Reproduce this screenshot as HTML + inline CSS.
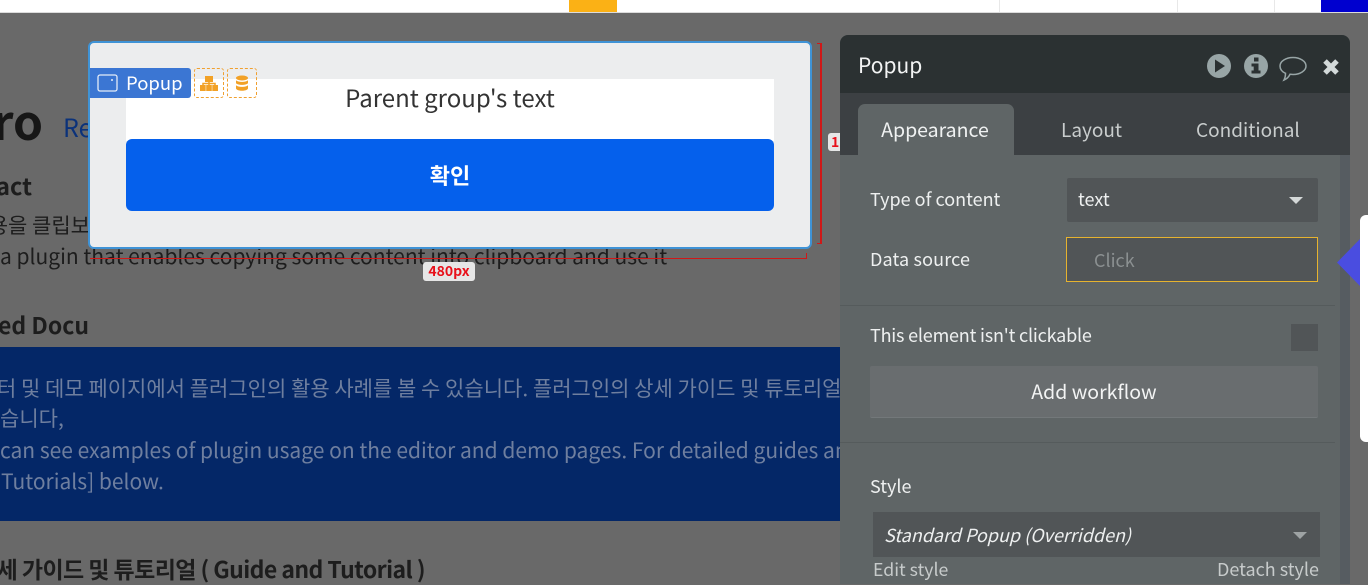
<!DOCTYPE html>
<html lang="en">
<head>
<meta charset="utf-8">
<title>Popup</title>
<style>
html,body{margin:0;padding:0;width:1368px;height:584px;overflow:hidden;background:#696969}
*{box-sizing:border-box}
.a{position:absolute;white-space:nowrap}
.k{font-family:"Liberation Sans","Noto Sans CJK KR",sans-serif}
.n,.n *{font-family:"Noto Sans CJK KR","Liberation Sans",sans-serif}
.pg{color:#1d1d1d;line-height:30px}
.b{font-weight:700}
.bl{color:#6f7f9f;font-size:21px;line-height:30px;font-weight:400}
.p{color:#eef0f0;font-size:18px;line-height:26px}
</style>
</head>
<body class="n">
<div class="a" style="left:0;top:0;width:1368px;height:13px;background:#fff;border-bottom:1px solid #dcdcdc"></div>
<div class="a" style="left:569px;top:0;width:48px;height:12px;background:#fbb115"></div>
<div class="a" style="left:999px;top:0;width:1px;height:12px;background:#e8e8e8"></div>
<div class="a" style="left:1177px;top:0;width:1px;height:12px;background:#e8e8e8"></div>
<div class="a" style="left:1274px;top:0;width:1px;height:12px;background:#e8e8e8"></div>
<div class="a" style="left:1321px;top:0;width:47px;height:12px;background:#0000cf"></div>

<!-- page behind -->
<div class="a pg b" style="right:1325px;top:94px;font-size:48px;line-height:50px;color:#161616">ro</div>
<div class="a pg" style="left:63px;top:112px;font-size:25px;color:#0b327a">Re</div>
<div class="a pg b" style="right:1336px;top:170px;font-size:23.500px">act</div>
<div class="a pg" style="right:1278px;top:210px;font-size:21px;width:200px;text-align:right">용을 클립보</div>
<div class="a pg" style="left:0;top:241px;font-size:21px">a plugin that enables copying some content into clipboard and use it</div>
<div class="a pg b" style="right:1279px;top:309px;font-size:23px">ed Docu</div>
<div class="a" style="left:0;top:347px;width:840px;height:174px;background:#042767;overflow:hidden">
  <div class="a bl" style="left:-3px;top:26px">터 및 데모 페이지에서 플러그인의 활용 사례를 볼 수 있습니다. 플러그인의 상세 가이드 및 튜토리얼</div>
  <div class="a bl" style="left:0;top:56px">습니다,</div>
  <div class="a bl" style="left:0;top:88px">can see examples of plugin usage on the editor and demo pages. For detailed guides and</div>
  <div class="a bl" style="left:1px;top:119px">Tutorials] below.</div>
</div>
<div class="a pg" style="right:943px;top:553px;font-size:23px;font-weight:700;letter-spacing:-.025em">세 가이드 및 튜토리얼 ( Guide and Tutorial )</div>

<!-- popup -->
<div class="a" style="left:88px;top:41px;width:724px;height:208px;background:#ecedee;border:2px solid #3f93d6;border-radius:6px"></div>
<div class="a" style="left:126px;top:79px;width:648px;height:62px;background:#fff"></div>
<div class="a" style="left:126px;top:78px;width:648px;text-align:center;font-size:24px;line-height:37px;color:#333">Parent group's text</div>
<div class="a b" style="left:126px;top:139px;width:648px;height:72px;background:#0560ec;border-radius:6px;color:#fff;text-align:center;font-size:22px;line-height:72px">확인</div>

<div class="a" style="left:90px;top:68px;width:101px;height:30px;background:#3b76d3;border-radius:0 3px 3px 0;color:#fff;font-size:18.500px;line-height:30px;padding-left:36px">Popup</div>
<svg class="a" style="left:97px;top:74px" width="22" height="18" viewBox="0 0 22 18"><rect x="1" y="1" width="19" height="16" rx="2" fill="none" stroke="#e4ecf8" stroke-width="1.3"/><circle cx="15" cy="6" r="1" fill="#e4ecf8"/></svg>
<div class="a" style="left:194px;top:68px;width:30px;height:30px;border:1px dashed #f0a030;border-radius:3px"></div>
<div class="a" style="left:227px;top:68px;width:30px;height:30px;border:1px dashed #f0a030;border-radius:3px"></div>
<svg class="a" style="left:200px;top:76px" width="18" height="15" viewBox="0 0 18 15"><path d="M5 0h8v6H5zM0 9h5.700v6H0zM6.200 9h5.600v6H6.200zM12.300 9H18v6h-5.700z" fill="#f2a126"/><path d="M9 6v3M3 9V7.500h12V9" fill="none" stroke="#f2a126" stroke-width="1.500"/></svg>
<svg class="a" style="left:235px;top:75px" width="14" height="17" viewBox="0 0 14 17"><ellipse cx="7" cy="3" rx="6" ry="2.500" fill="#f2a126"/><path d="M1 5c1 2.500 11 2.500 12 0v3c-1 2.500-11 2.500-12 0zM1 10c1 2.500 11 2.500 12 0v3.500c-1 3-11 3-12 0z" fill="#f2a126"/></svg>

<!-- red measures -->
<div class="a" style="left:90px;top:258px;width:717px;height:1px;background:#d01818"></div>
<div class="a" style="left:806px;top:253px;width:1px;height:6px;background:#d01818"></div>
<div class="a" style="left:820px;top:43px;width:2px;height:201px;background:#d01818"></div>
<div class="a" style="left:817px;top:43px;width:5px;height:1px;background:#d01818"></div>
<div class="a" style="left:817px;top:243px;width:5px;height:1px;background:#d01818"></div>
<div class="a k b" style="left:423px;top:262px;width:52px;height:19px;background:#e6e6e6;border-radius:3px;color:#e8101a;font-size:14px;line-height:19px;text-align:center">480px</div>
<div class="a k b" style="left:828px;top:133px;width:20px;height:18px;background:#e6e6e6;border-radius:3px;color:#e8101a;font-size:14px;line-height:19px;padding-left:3px">1</div>

<!-- property panel -->
<div class="a" style="left:840px;top:35px;width:510px;height:549px;background:#5f6566;border-radius:8px 8px 0 0;overflow:hidden">
  <div class="a" style="left:0;top:0;width:510px;height:58px;background:#2b3132"></div>
  <div class="a" style="left:0;top:58px;width:510px;height:62px;background:#3c4043"></div>
  <div class="a" style="left:18px;top:69px;width:156px;height:52px;background:#5f6566;border-radius:7px 7px 0 0"></div>
  <div class="a" style="left:500px;top:120px;width:10px;height:429px;background:#565c61"></div>
</div>
<div class="a" style="left:858px;top:49px;color:#f3f4f4;font-size:21px;line-height:32px">Popup</div>
<svg class="a" style="left:1205px;top:52px" width="140" height="30" viewBox="0 0 140 30">
  <circle cx="14" cy="14" r="12" fill="#98a5a6"/><path d="M10 7.500l10 6.500-10 6.500z" fill="#2b3132"/>
  <circle cx="51" cy="14" r="12" fill="#98a5a6"/><path d="M49 5.500h4.500v4H49zM46.500 11.500h7v7h2v3h-9v-3h2.200v-4h-2.200z" fill="#2b3132"/>
  <path d="M88 5.500c7.200 0 13 3.800 13 8.500s-5.800 8.500-13 8.500c-1 0-2-.1-3-.2-1 2.200-3 4.500-6 5.700 1-1.800 1.500-4 1.500-6.700-3.400-1.500-5.500-4.300-5.500-7.300 0-4.700 5.800-8.500 13-8.500z" fill="none" stroke="#98a5a6" stroke-width="1.500"/>
  <path d="M120 9l12 12M132 9l-12 12" fill="none" stroke="#d3d9d9" stroke-width="5"/>
</svg>
<div class="a" style="left:857px;top:115px;width:156px;text-align:center;font-size:19.500px;line-height:28px;color:#f0f2f2">Appearance</div>
<div class="a" style="left:1061px;top:116px;font-size:19px;line-height:28px;color:#c9cdcd">Layout</div>
<div class="a" style="left:1196px;top:116px;font-size:19px;line-height:28px;color:#c9cdcd">Conditional</div>

<div class="a p" style="left:870px;top:186px">Type of content</div>
<div class="a" style="left:1067px;top:178px;width:251px;height:44px;background:#515557;border-radius:2px"></div>
<div class="a p" style="left:1078px;top:186px">text</div>
<div class="a" style="left:1289px;top:197px;border-left:7px solid transparent;border-right:7px solid transparent;border-top:7px solid #d4d8d8"></div>

<div class="a p" style="left:870px;top:246px;letter-spacing:.15px">Data source</div>
<div class="a" style="left:1066px;top:237px;width:252px;height:45px;background:#515557;border:1px solid #e6b32f"></div>
<div class="a" style="left:1094px;top:247px;font-size:18px;line-height:26px;color:#8b9091">Click</div>
<div class="a" style="left:840px;top:305px;width:495px;height:1px;background:#555b5c"></div>

<div class="a p" style="left:870px;top:322px;letter-spacing:-.2px">This element isn't clickable</div>
<div class="a" style="left:1291px;top:324px;width:27px;height:27px;background:#515557"></div>
<div class="a" style="left:870px;top:366px;width:448px;height:52px;background:#696d6f;border-radius:2px;border-bottom:1px solid #73787a;color:#f3f4f4;font-size:19.500px;line-height:49px;text-align:center">Add workflow</div>
<div class="a" style="left:840px;top:442px;width:495px;height:1px;background:#555b5c"></div>

<div class="a p" style="left:870px;top:473px">Style</div>
<div class="a" style="left:873px;top:512px;width:447px;height:45px;background:#515557"></div>
<div class="a p" style="left:884px;top:522px;font-style:italic">Standard Popup (Overridden)</div>
<div class="a" style="left:1293px;top:532px;border-left:7px solid transparent;border-right:7px solid transparent;border-top:7px solid #9ea3a4"></div>
<div class="a" style="left:873px;top:556px;font-size:17.700px;line-height:26px;color:#c7cbcb">Edit style</div>
<div class="a" style="right:49px;top:556px;font-size:18px;line-height:26px;color:#c7cbcb">Detach style</div>

<!-- pointer -->
<div class="a" style="left:1360px;top:215px;width:8px;height:227px;background:#fff;border-radius:6px 0 0 6px"></div>
<svg class="a" style="left:1337px;top:239px" width="23" height="47" viewBox="0 0 23 47"><path d="M0 23.500L23 0v47z" fill="#4a4de0"/></svg>
</body>
</html>
